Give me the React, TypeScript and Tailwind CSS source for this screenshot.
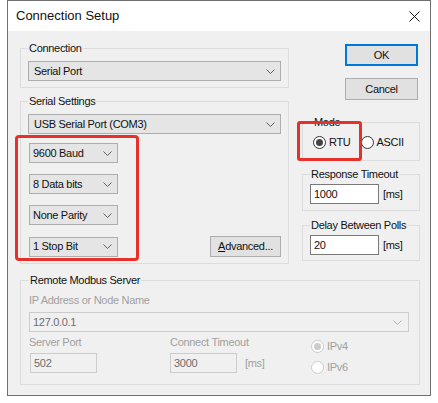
import React from 'react';

const Chevron = ({ color = '#5f5f5f' }: { color?: string }) => (
  <svg width="9" height="5" viewBox="0 0 9 5" className="shrink-0">
    <path d="M0.5 0.5L4.5 4.5L8.5 0.5" fill="none" stroke={color} strokeWidth="1" />
  </svg>
);

function Select({ value, className = '' }: { value: string; className?: string }) {
  return (
    <div className={`flex h-[20px] items-center justify-between border border-[#adadad] bg-[#e5e5e5] pl-[5px] pr-[5px] ${className}`}>
      <span className="leading-none">{value}</span>
      <Chevron />
    </div>
  );
}

function Group({
  label, className = '', labelClass = '', children,
}: { label: string; className?: string; labelClass?: string; children: React.ReactNode }) {
  return (
    <fieldset className={`border border-[#dcdcdc] ${className}`}>
      <legend className={`px-[1px] leading-[14px] whitespace-nowrap ${labelClass}`}>{label}</legend>
      {children}
    </fieldset>
  );
}

function Radio({ label, checked, disabled }: { label: string; checked?: boolean; disabled?: boolean }) {
  return (
    <div className="flex items-center">
      <span
        className={`flex h-[13px] w-[13px] items-center justify-center rounded-full border bg-white ${
          disabled ? 'border-[#cccccc]' : 'border-[#333333]'
        }`}
      >
        {checked && <span className={`h-[7px] w-[7px] rounded-full ${disabled ? 'bg-[#cccccc]' : 'bg-[#444444]'}`} />}
      </span>
      <span className={`ml-[3px] leading-none ${disabled ? 'text-[#a0a0a0]' : ''}`}>{label}</span>
    </div>
  );
}

function Field({ value, className = '', disabled }: { value: string; className?: string; disabled?: boolean }) {
  return (
    <div
      className={`flex h-[20px] items-center border pl-[3px] leading-none ${
        disabled ? 'border-[#cccccc] bg-[#f0f0f0] text-[#6d6d6d]' : 'border-[#7a7a7a] bg-white'
      } ${className}`}
    >
      {value}
    </div>
  );
}

export default function App() {
  return (
    <div className="h-[403px] w-[438px] bg-white font-['Liberation_Sans',Arial,sans-serif] text-[11px] tracking-[-0.3px] text-[#111]">
      <div className="ml-[7px] flex h-[396px] w-[424px] flex-col border border-[#707070]">
        <div className="flex h-[30px] items-center justify-between bg-white pl-[8px] pr-[10px]">
          <span className="text-[13px] tracking-normal">Connection Setup</span>
          <svg width="11" height="11" viewBox="0 0 11 11">
            <path d="M0.5 0.5L10.5 10.5M10.5 0.5L0.5 10.5" stroke="#111" strokeWidth="1" />
          </svg>
        </div>

        <div className="relative flex-1 bg-[#f0f0f0] pl-[12px] pt-[10px]">
          <div className="flex">
            {/* left column */}
            <div className="w-[269px]">
              <Group label="Connection" className="px-[7px] pb-[6px] pt-[6px]">
                <Select value="Serial Port" />
              </Group>
              <Group label="Serial Settings" className="mt-[6px] px-[7px] pb-[6px] pt-[6px]">
                <Select value="USB Serial Port (COM3)" />
                <div className="mt-[9px] flex flex-col gap-[11px] pl-[1px]">
                  <Select value="9600 Baud" className="w-[89px] !pl-[3px]" />
                  <Select value="8 Data bits" className="w-[89px] !pl-[3px]" />
                  <Select value="None Parity" className="w-[89px] !pl-[3px]" />
                  <div className="flex items-center justify-between">
                    <Select value="1 Stop Bit" className="w-[89px] !pl-[3px]" />
                    <button className="flex h-[21px] w-[71px] items-center justify-center border border-[#adadad] bg-[#e1e1e1] leading-none">
                      <span className="underline">A</span>dvanced...
                    </button>
                  </div>
                </div>
              </Group>
            </div>

            {/* right column */}
            <div className="ml-[13px] flex w-[118px] flex-col">
              <button className="ml-[43px] mt-[3px] h-[22px] w-[73px] border-2 border-[#0078d7] bg-[#e1e1e1] leading-none">
                OK
              </button>
              <button className="ml-[43px] mt-[12px] h-[22px] w-[73px] border border-[#adadad] bg-[#e1e1e1] leading-none">
                Cancel
              </button>
              <Group label="Mode" className="mt-[15px] px-[10px] pb-[10px] pt-[5px]">
                <div className="flex h-[16px] items-center gap-[10px]">
                  <Radio label="RTU" checked />
                  <Radio label="ASCII" />
                </div>
              </Group>
              <Group label="Response Timeout" className="mt-[6px] px-[7px] pb-[6px] pt-[3px]">
                <div className="flex items-center">
                  <Field value="1000" className="w-[69px]" />
                  <span className="ml-[4px]">[ms]</span>
                </div>
              </Group>
              <Group label="Delay Between Polls" className="mt-[7px] px-[7px] pb-[5px] pt-[3px]">
                <div className="flex items-center">
                  <Field value="20" className="w-[69px]" />
                  <span className="ml-[4px]">[ms]</span>
                </div>
              </Group>
            </div>
          </div>

          <Group label="Remote Modbus Server" className="mt-[9px] w-[400px] px-[8px] pb-[10px] pt-[6px]">
            <div className="leading-[14px] text-[#a0a0a0]">IP Address or Node Name</div>
            <div className="mt-[5px] flex h-[20px] w-[380px] items-center justify-between border border-[#cccccc] bg-[#f0f0f0] pl-[3px] pr-[6px] text-[#6d6d6d]">
              <span className="leading-none">127.0.0.1</span>
              <Chevron color="#b0b0b0" />
            </div>
            <div className="mt-[3px] flex">
              <div className="w-[141px]">
                <div className="leading-[14px] text-[#a0a0a0]">Server Port</div>
                <Field value="502" disabled className="ml-[1px] mt-[4px] w-[67px]" />
              </div>
              <div className="w-[141px]">
                <div className="leading-[14px] text-[#a0a0a0]">Connect Timeout</div>
                <div className="mt-[4px] flex items-center">
                  <Field value="3000" disabled className="w-[67px]" />
                  <span className="ml-[8px] text-[#a0a0a0]">[ms]</span>
                </div>
              </div>
              <div className="flex flex-col gap-[8px] pt-[5px]">
                <Radio label="IPv4" checked disabled />
                <Radio label="IPv6" disabled />
              </div>
            </div>
          </Group>

          {/* annotation boxes */}
          <div className="pointer-events-none absolute left-[7px] top-[104px] h-[126px] w-[124px] rounded-[4px] border-[3px] border-[#e8302a]" />
          <div className="pointer-events-none absolute left-[289px] top-[90px] h-[40px] w-[65px] rounded-[3px] border-[3px] border-[#e8302a]" />
        </div>
      </div>
    </div>
  );
}
